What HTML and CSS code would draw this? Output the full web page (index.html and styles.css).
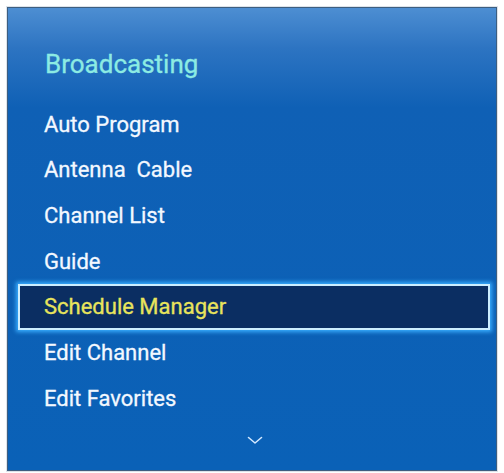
FILE: index.html
```html
<!DOCTYPE html>
<html>
<head>
<meta charset="utf-8">
<link rel="stylesheet" href="styles.css">
</head>
<body>
<div class="page">
  <div class="panel">
    <h1 class="title">Broadcasting</h1>
    <ul class="menu">
      <li class="item">Auto Program</li>
      <li class="item">Antenna&nbsp; Cable</li>
      <li class="item">Channel List</li>
      <li class="item">Guide</li>
      <li class="item selected">Schedule Manager</li>
      <li class="item">Edit Channel</li>
      <li class="item">Edit Favorites</li>
    </ul>
    <div class="more">
      <svg class="chev" width="16" height="9" viewBox="0 0 16 9"><polyline points="1.5,1.5 8,7 14.5,1.5" fill="none" stroke="#d2e8ff" stroke-width="1.6" stroke-linecap="round" stroke-linejoin="round"/></svg>
    </div>
  </div>
</div>
</body>
</html>
```
FILE: styles.css
```css
html, body {
  margin: 0;
  padding: 0;
  background: #ffffff;
}
.page {
  padding: 7px;
  width: 490px;
}
.panel {
  box-sizing: border-box;
  width: 490px;
  height: 464px;
  border: 1px solid #3d5e80;
  box-shadow: 0 0 0 1px #dde3ea;
  background: linear-gradient(to bottom, #4d8ed2 0px, #2d74c2 40px, #0f60b5 100px, #0a61b7 100%);
  font-family: Roboto, "Liberation Sans", sans-serif;
}
.title {
  margin: 0;
  padding: 41px 0 0 37px;
  font-size: 26px;
  font-weight: 400;
  line-height: 30px;
  color: #8cebe3;
  -webkit-text-stroke: 0.3px #8cebe3;
}
.menu {
  list-style: none;
  margin: 22.5px 6px 0 10px;
  padding: 0;
}
.item {
  box-sizing: border-box;
  height: 45.7px;
  line-height: 45.7px;
  padding-left: 26px;
  font-size: 22px;
  font-weight: 400;
  color: #f3f8ff;
  -webkit-text-stroke: 0.3px #f3f8ff;
}
.item.selected {
  background: #0b2e62;
  color: #e8e45c;
  -webkit-text-stroke: 0.3px #e8e45c;
  border: 2px solid #cdeeff;
  padding-left: 24px;
  line-height: 41.7px;
  box-shadow: 0 0 4px 2px #3aaeff;
}
.more {
  display: flex;
  justify-content: center;
  padding-left: 6px;
  margin-top: 15px;
}
.chev {
  display: block;
}
```
